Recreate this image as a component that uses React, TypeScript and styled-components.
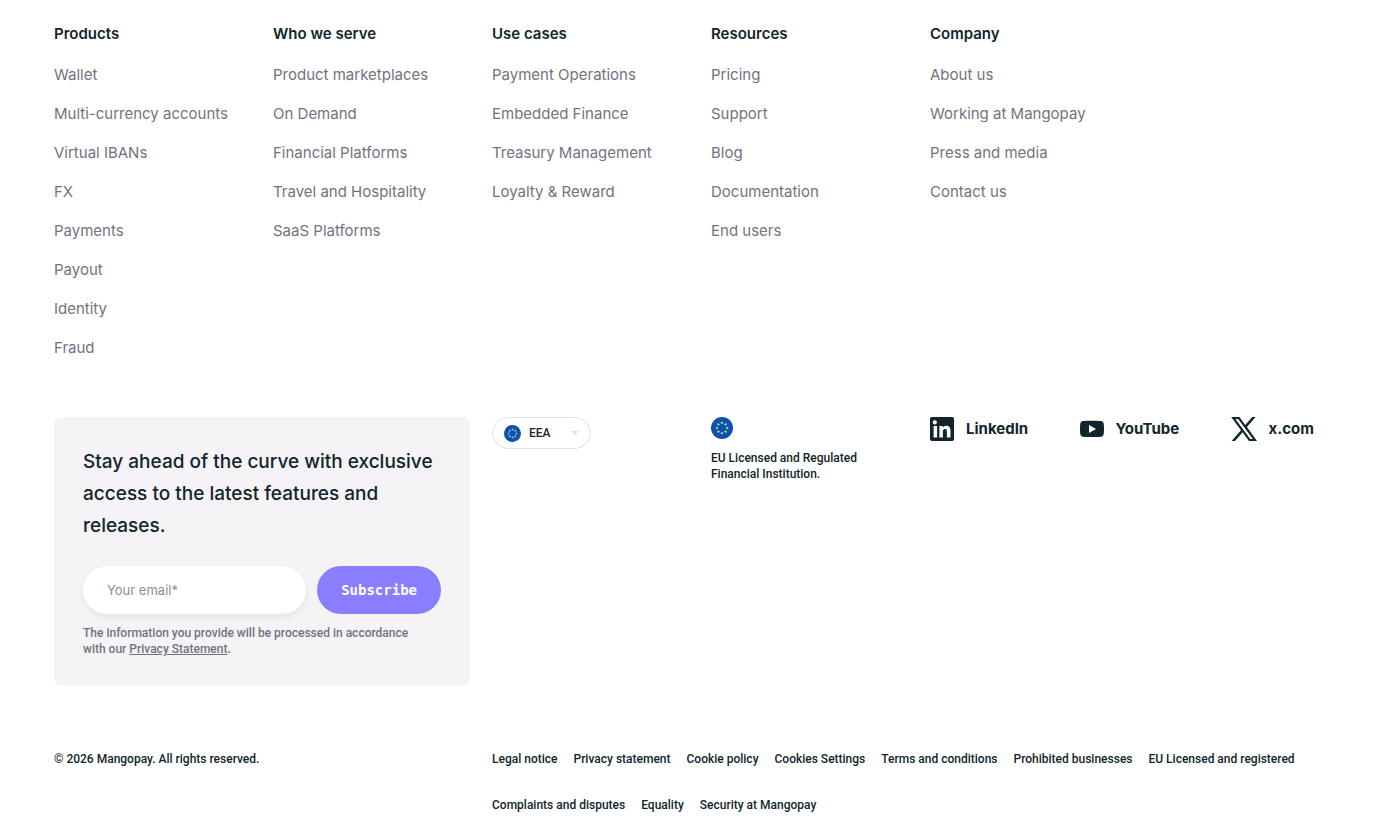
import React from "react";
import styled, { createGlobalStyle } from "styled-components";

const ink = "#10252c";
const muted = "#74727f";
const smallFont = 'Roboto, "Liberation Sans", sans-serif';

const GlobalStyle = createGlobalStyle`
  *, *::before, *::after { box-sizing: border-box; }
  body {
    margin: 0;
    background: #fff;
    color: ${ink};
    font-family: Inter, "Liberation Sans", sans-serif;
  }
  a { color: inherit; text-decoration: none; }
  a:hover { text-decoration: underline; }
  ul { list-style: none; margin: 0; padding: 0; }
`;

const Footer = styled.footer`
  display: flex;
  flex-direction: column;
  padding: 22px 54px 24px;
`;

const Grid = styled.div`
  display: grid;
  grid-template-columns: repeat(6, minmax(0, 1fr));
  column-gap: 22px;
`;

const Column = styled.nav`
  white-space: nowrap;
`;

const ColumnTitle = styled.h2`
  margin: 0 0 9px;
  font-size: 15px;
  line-height: 24px;
  font-weight: 600;
`;

const ColumnItem = styled.li`
  font-size: 15px;
  line-height: 39px;
  color: ${muted};
`;

const MiddleRow = styled(Grid)`
  align-items: start;
  margin-top: 50px;
`;

const Newsletter = styled.section`
  grid-column: span 2;
  padding: 29px;
  border-radius: 8px;
  background: #f5f3f6;
`;

const NewsletterTitle = styled.h3`
  margin: 0 0 24px;
  font-size: 19px;
  line-height: 32px;
  font-weight: 500;
`;

const Form = styled.form`
  display: flex;
  gap: 11px;
`;

const EmailInput = styled.input`
  flex: 1;
  min-width: 0;
  height: 48px;
  padding: 0 24px;
  border: 0;
  border-radius: 24px;
  background: #fff;
  box-shadow: 0 3px 6px rgba(16, 37, 44, 0.08);
  color: ${ink};
  font-family: inherit;
  font-size: 13px;
  &::placeholder { color: #8f8d9b; opacity: 1; }
`;

const SubscribeButton = styled.button`
  height: 48px;
  padding: 0 24px;
  border: 0;
  border-radius: 24px;
  background: #887eff;
  color: #fff;
  font-family: "DejaVu Sans Mono", monospace;
  font-size: 14px;
  font-weight: 700;
  cursor: pointer;
`;

const Note = styled.p`
  margin: 11px 0 0;
  padding-right: 20px;
  font-family: ${smallFont};
  font-size: 12px;
  line-height: 16px;
  font-weight: 500;
  color: ${muted};
  a { text-decoration: underline; }
`;

const RegionBox = styled.div`
  display: inline-grid;
  grid-template-columns: 17px 1fr 10px;
  align-items: center;
  width: 99px;
  height: 32px;
  padding: 0 10px 0 11px;
  border: 1px solid #e4e1e6;
  border-radius: 16px;
  > svg { grid-row: 1; pointer-events: none; }
  > svg:first-child { grid-column: 1; }
  > svg:last-child { grid-column: 3; }
`;

const RegionSelect = styled.select`
  grid-row: 1;
  grid-column: 1 / -1;
  height: 30px;
  padding: 0 0 0 25px;
  border: 0;
  background: transparent;
  appearance: none;
  color: ${ink};
  font-family: ${smallFont};
  font-size: 12px;
  font-weight: 500;
`;

const License = styled.p`
  margin: 0;
  font-family: ${smallFont};
  font-size: 12px;
  line-height: 16px;
  font-weight: 500;
  white-space: nowrap;
  svg { display: block; margin-bottom: 11px; }
`;

const Socials = styled.div`
  grid-column: span 2;
  display: flex;
  justify-content: space-between;
  padding-right: 32px;
`;

const SocialLink = styled.a`
  display: flex;
  align-items: center;
  gap: 12px;
  font-size: 15px;
  line-height: 24px;
  font-weight: 700;
`;

const BottomRow = styled(Grid)`
  margin-top: 64px;
  font-family: ${smallFont};
  font-size: 12px;
  line-height: 18px;
  font-weight: 500;
`;

const Copyright = styled.p`
  grid-column: span 2;
  margin: 0;
`;

const LegalList = styled.ul`
  grid-column: span 4;
  display: flex;
  flex-wrap: wrap;
  gap: 28px 16px;
`;

const columns = [
  {
    title: "Products",
    items: ["Wallet", "Multi-currency accounts", "Virtual IBANs", "FX", "Payments", "Payout", "Identity", "Fraud"],
  },
  {
    title: "Who we serve",
    items: ["Product marketplaces", "On Demand", "Financial Platforms", "Travel and Hospitality", "SaaS Platforms"],
  },
  {
    title: "Use cases",
    items: ["Payment Operations", "Embedded Finance", "Treasury Management", "Loyalty & Reward"],
  },
  { title: "Resources", items: ["Pricing", "Support", "Blog", "Documentation", "End users"] },
  { title: "Company", items: ["About us", "Working at Mangopay", "Press and media", "Contact us"] },
];

const legal = [
  "Legal notice",
  "Privacy statement",
  "Cookie policy",
  "Cookies Settings",
  "Terms and conditions",
  "Prohibited businesses",
  "EU Licensed and registered",
  "Complaints and disputes",
  "Equality",
  "Security at Mangopay",
];

const starAngles = [0, 45, 90, 135, 180, 225, 270, 315];

function EuFlag({ size }: { size: number }) {
  return (
    <svg width={size} height={size} viewBox="0 0 22 22" aria-hidden="true">
      <circle cx="11" cy="11" r="11" fill="#0b52b5" />
      {starAngles.map((angle) => (
        <path
          key={angle}
          d="M11 4.3l.45 1.03 1.12.1-.84.74.25 1.1-.98-.58-.98.58.25-1.1-.84-.74 1.12-.1z"
          fill="#d6dc7c"
          transform={`rotate(${angle} 11 11)`}
        />
      ))}
    </svg>
  );
}

function LinkedInIcon() {
  return (
    <svg width="24" height="24" viewBox="0 0 24 24" fill={ink} aria-hidden="true">
      <path d="M22.2 0H1.8C.8 0 0 .8 0 1.7v20.6c0 .9.8 1.7 1.8 1.7h20.4c1 0 1.8-.8 1.8-1.7V1.7C24 .8 23.2 0 22.2 0zM7.1 20.5H3.6V9h3.5v11.5zM5.3 7.4a2.1 2.1 0 1 1 0-4.1 2.1 2.1 0 0 1 0 4.1zm15.1 13.1h-3.5v-5.6c0-1.3 0-3-1.9-3s-2.1 1.4-2.1 2.9v5.7H9.4V9h3.4v1.6c.5-.9 1.6-1.9 3.4-1.9 3.6 0 4.3 2.4 4.3 5.5v6.3z" />
    </svg>
  );
}

function YouTubeIcon() {
  return (
    <svg width="24" height="24" viewBox="0 0 24 24" aria-hidden="true">
      <path
        fill={ink}
        d="M3.1 4.1C6 3.7 18 3.7 20.9 4.1c1.5.2 2.6 1.2 2.8 2.7.4 2.9.4 7.3 0 10.2-.2 1.5-1.3 2.6-2.8 2.8-2.9.4-14.9.4-17.8 0C1.6 19.6.5 18.5.3 17c-.4-2.9-.4-7.3 0-10.2C.5 5.3 1.6 4.3 3.1 4.1z"
      />
      <path fill="#fff" d="M9 7.9v8.2l7-4.1z" />
    </svg>
  );
}

function XIcon() {
  return (
    <svg width="26" height="24" viewBox="0 0 26 24" fill={ink} aria-hidden="true">
      <path
        fillRule="evenodd"
        d="M.2 0h8.200l5.900 7.900L21.200 0h3.400l-8.700 10L26 24h-8l-6.400-8.700L4 24H.6l9.400-10.800zM4.400 2l14.800 20h2.600L7.200 2z"
      />
    </svg>
  );
}

function CaretIcon() {
  return (
    <svg width="10" height="6" viewBox="0 0 10 6" aria-hidden="true">
      <path d="M1 1h8L5 5z" fill="#e6e3e8" />
    </svg>
  );
}

export default function App() {
  return (
    <>
      <GlobalStyle />
      <Footer>
        <Grid>
          {columns.map((column) => (
            <Column key={column.title} aria-label={column.title}>
              <ColumnTitle>{column.title}</ColumnTitle>
              <ul>
                {column.items.map((item) => (
                  <ColumnItem key={item}>
                    <a href="#">{item}</a>
                  </ColumnItem>
                ))}
              </ul>
            </Column>
          ))}
        </Grid>

        <MiddleRow>
          <Newsletter>
            <NewsletterTitle>
              Stay ahead of the curve with exclusive access to the latest features and releases.
            </NewsletterTitle>
            <Form onSubmit={(event) => event.preventDefault()}>
              <EmailInput type="email" placeholder="Your email*" aria-label="Your email" required />
              <SubscribeButton type="submit">Subscribe</SubscribeButton>
            </Form>
            <Note>
              The information you provide will be processed in accordance with our{" "}
              <a href="#">Privacy Statement</a>.
            </Note>
          </Newsletter>

          <RegionBox>
            <EuFlag size={17} />
            <RegionSelect aria-label="Region" defaultValue="EEA">
              <option>EEA</option>
            </RegionSelect>
            <CaretIcon />
          </RegionBox>

          <License>
            <EuFlag size={22} />
            EU Licensed and Regulated
            <br />
            Financial Institution.
          </License>

          <Socials>
            <SocialLink href="#">
              <LinkedInIcon />
              LinkedIn
            </SocialLink>
            <SocialLink href="#">
              <YouTubeIcon />
              YouTube
            </SocialLink>
            <SocialLink href="#">
              <XIcon />
              x.com
            </SocialLink>
          </Socials>
        </MiddleRow>

        <BottomRow>
          <Copyright>© 2026 Mangopay. All rights reserved.</Copyright>
          <LegalList>
            {legal.map((item) => (
              <li key={item}>
                <a href="#">{item}</a>
              </li>
            ))}
          </LegalList>
        </BottomRow>
      </Footer>
    </>
  );
}
